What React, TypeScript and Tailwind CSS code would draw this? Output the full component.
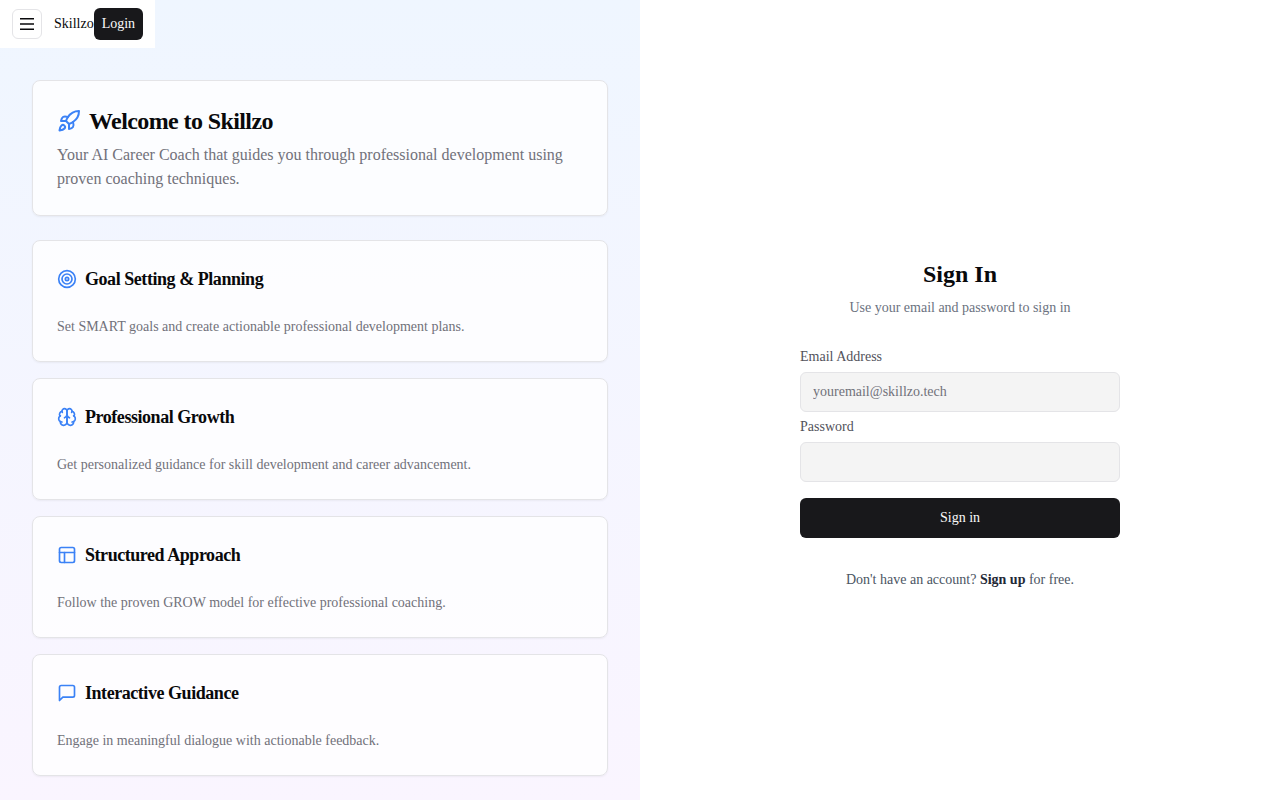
import type { ReactNode } from "react";

type IconProps = { className: string; children: ReactNode };

function Icon({ className, children }: IconProps) {
  return (
    <svg
      viewBox="0 0 24 24"
      fill="none"
      stroke="currentColor"
      strokeWidth="2"
      strokeLinecap="round"
      strokeLinejoin="round"
      aria-hidden="true"
      className={className}
    >
      {children}
    </svg>
  );
}

const rocket = (
  <>
    <path d="M4.5 16.5c-1.5 1.26-2 5-2 5s3.74-.5 5-2c.71-.84.7-2.13-.09-2.91a2.18 2.18 0 0 0-2.91-.09z" />
    <path d="m12 15-3-3a22 22 0 0 1 2-3.95A12.88 12.88 0 0 1 22 2c0 2.72-.78 7.5-6 11a22.35 22.35 0 0 1-4 2z" />
    <path d="M9 12H4s.55-3.03 2-4c1.62-1.08 5 0 5 0" />
    <path d="M12 15v5s3.03-.55 4-2c1.08-1.62 0-5 0-5" />
  </>
);

const features = [
  {
    title: "Goal Setting & Planning",
    text: "Set SMART goals and create actionable professional development plans.",
    icon: (
      <>
        <circle cx="12" cy="12" r="10" />
        <circle cx="12" cy="12" r="6" />
        <circle cx="12" cy="12" r="2" />
      </>
    ),
  },
  {
    title: "Professional Growth",
    text: "Get personalized guidance for skill development and career advancement.",
    icon: (
      <>
        <path d="M12 5a3 3 0 1 0-5.997.125 4 4 0 0 0-2.526 5.77 4 4 0 0 0 .556 6.588A4 4 0 1 0 12 18Z" />
        <path d="M12 5a3 3 0 1 1 5.997.125 4 4 0 0 1 2.526 5.77 4 4 0 0 1-.556 6.588A4 4 0 1 1 12 18Z" />
        <path d="M15 13a4.5 4.5 0 0 1-3-4 4.5 4.5 0 0 1-3 4" />
        <path d="M17.599 6.5a3 3 0 0 0 .399-1.375" />
        <path d="M6.003 5.125A3 3 0 0 0 6.401 6.5" />
        <path d="M3.477 10.896a4 4 0 0 1 .585-.396" />
        <path d="M19.938 10.5a4 4 0 0 1 .585.396" />
        <path d="M6 18a4 4 0 0 1-1.967-.516" />
        <path d="M19.967 17.484A4 4 0 0 1 18 18" />
      </>
    ),
  },
  {
    title: "Structured Approach",
    text: "Follow the proven GROW model for effective professional coaching.",
    icon: (
      <>
        <rect width="18" height="18" x="3" y="3" rx="2" />
        <path d="M3 9h18" />
        <path d="M9 21V9" />
      </>
    ),
  },
  {
    title: "Interactive Guidance",
    text: "Engage in meaningful dialogue with actionable feedback.",
    icon: <path d="M21 15a2 2 0 0 1-2 2H7l-4 4V5a2 2 0 0 1 2-2h14a2 2 0 0 1 2 2z" />,
  },
];

function Card({ children }: { children: ReactNode }) {
  return (
    <div className="rounded-lg border border-[#e4e4e7] bg-white/80 p-6 shadow-[0_1px_2px_0_rgba(0,0,0,0.05)]">
      {children}
    </div>
  );
}

function Header() {
  return (
    <header className="fixed top-0 left-0 z-10 flex items-center bg-white px-3 py-2">
      <button
        type="button"
        aria-label="Open menu"
        className="mr-3 flex size-[30px] items-center justify-center rounded-md border border-[#e4e4e7] bg-white"
      >
        <svg viewBox="0 0 16 16" fill="currentColor" aria-hidden="true" className="size-4">
          <path d="M1 2h14v1.5H1zM1 7.25h14v1.5H1zM1 12.5h14V14H1z" />
        </svg>
      </button>
      <span className="text-sm">Skillzo</span>
      <a
        href="#login"
        className="flex h-8 items-center rounded-md bg-[#18181b] px-2 text-sm text-[#fafafa]"
      >
        Login
      </a>
    </header>
  );
}

function Field({ id, label, type, placeholder }: { id: string; label: string; type: string; placeholder?: string }) {
  return (
    <div className="flex flex-col gap-2">
      <label htmlFor={id} className="text-sm leading-none text-[#52525b]">
        {label}
      </label>
      <input
        id={id}
        type={type}
        placeholder={placeholder}
        className="h-10 w-full rounded-md border border-[#e4e4e7] bg-[#f4f4f4] px-3 text-sm placeholder:text-[#71717a]"
      />
    </div>
  );
}

export default function App() {
  return (
    <div className="grid min-h-screen bg-white font-['Liberation_Serif',serif] text-[#09090b] antialiased md:grid-cols-2">
      <Header />
      <section className="flex flex-col gap-6 bg-linear-to-b from-[#eff6ff] to-[#faf5ff] px-8 pt-20 pb-6">
        <Card>
          <h1 className="flex items-center gap-2 text-2xl font-bold tracking-tight">
            <Icon className="size-6 text-[#3b82f6]">{rocket}</Icon>
            Welcome to Skillzo
          </h1>
          <p className="mt-1.5 text-base text-[#71717a]">
            Your AI Career Coach that guides you through professional development using proven
            coaching techniques.
          </p>
        </Card>
        <div className="flex flex-col gap-4">
          {features.map((feature) => (
            <Card key={feature.title}>
              <h2 className="flex items-center gap-2 text-lg font-bold tracking-tight">
                <Icon className="size-5 text-[#3b82f6]">{feature.icon}</Icon>
                {feature.title}
              </h2>
              <p className="mt-6 text-sm text-[#71717a]">{feature.text}</p>
            </Card>
          ))}
        </div>
      </section>
      <main className="flex items-center justify-center px-4 pt-12">
        <div className="flex w-full max-w-80 flex-col gap-8">
          <div className="flex flex-col gap-2 text-center">
            <h2 className="text-2xl font-bold">Sign In</h2>
            <p className="text-sm text-[#6b7280]">Use your email and password to sign in</p>
          </div>
          <form className="flex flex-col gap-4" onSubmit={(event) => event.preventDefault()}>
            <div className="flex flex-col gap-2">
              <Field id="email" label="Email Address" type="email" placeholder="youremail@skillzo.tech" />
              <Field id="password" label="Password" type="password" />
            </div>
            <button type="submit" className="h-10 rounded-md bg-[#18181b] text-sm text-[#fafafa]">
              Sign in
            </button>
          </form>
          <p className="text-center text-sm text-[#4b5563]">
            Don't have an account?{" "}
            <a href="#signup" className="font-bold text-[#1f2937]">
              Sign up
            </a>{" "}
            for free.
          </p>
        </div>
      </main>
    </div>
  );
}
